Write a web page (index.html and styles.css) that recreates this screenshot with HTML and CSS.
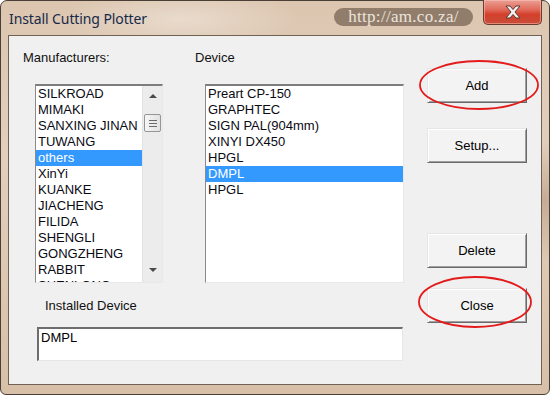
FILE: index.html
```html
<!DOCTYPE html>
<html>
<head>
<meta charset="utf-8">
<link rel="stylesheet" href="styles.css">
</head>
<body>
<div class="window">
  <div class="titlebar">
    <span class="title">Install Cutting Plotter</span>
    <span class="watermark">http://am.co.za/</span>
    <span class="closebtn">
      <svg width="20" height="14" viewBox="0 0 20 14"><path d="M3 1 L7 1 L10 4.5 L13 1 L17 1 L12 7 L17 13 L13 13 L10 9.5 L7 13 L3 13 L8 7 Z" fill="#f4f0f0" stroke="#5a3a34" stroke-width="1"/></svg>
    </span>
  </div>
  <div class="client">
    <div class="left">
      <div class="labels">
        <span class="lbl-manu">Manufacturers:</span>
        <span>Device</span>
      </div>
      <div class="lists">
        <div class="listbox manu">
          <ul class="items">
            <li>SILKROAD</li>
            <li>MIMAKI</li>
            <li>SANXING JINAN</li>
            <li>TUWANG</li>
            <li class="sel">others</li>
            <li>XinYi</li>
            <li>KUANKE</li>
            <li>JIACHENG</li>
            <li>FILIDA</li>
            <li>SHENGLI</li>
            <li>GONGZHENG</li>
            <li>RABBIT</li>
            <li>SHENLONG</li>
          </ul>
          <div class="scrollbar">
            <span class="arrow up"></span>
            <span class="thumb"><i></i><i></i><i></i></span>
            <span class="arrow down"></span>
          </div>
        </div>
        <div class="listbox device">
          <ul class="items">
            <li>Preart CP-150</li>
            <li>GRAPHTEC</li>
            <li>SIGN PAL(904mm)</li>
            <li>XINYI DX450</li>
            <li>HPGL</li>
            <li class="sel">DMPL</li>
            <li>HPGL</li>
          </ul>
        </div>
      </div>
      <div class="inst-label">Installed Device</div>
      <div class="installed">DMPL</div>
    </div>
    <div class="buttons">
      <button class="btn b-add">Add</button>
      <button class="btn b-setup">Setup...</button>
      <button class="btn b-delete">Delete</button>
      <button class="btn b-close">Close</button>
    </div>
  </div>
  <svg class="marks" width="550" height="395" viewBox="0 0 550 395">
    <ellipse cx="479" cy="85" rx="59" ry="24" fill="none" stroke="#e31b1b" stroke-width="1.8"/>
    <ellipse cx="475" cy="302" rx="56" ry="25" fill="none" stroke="#e31b1b" stroke-width="1.8"/>
  </svg>
</div>
</body>
</html>
```
FILE: styles.css
```css
* { box-sizing: border-box; }
html, body { margin: 0; padding: 0; }
body { width: 550px; height: 395px; overflow: hidden; background: #fff; }

.window {
  position: relative;
  width: 550px;
  height: 395px;
  border: 1px solid #4a3f36;
  border-radius: 7px 7px 6px 6px;
  background:
    radial-gradient(ellipse 120px 30px at 180px 18px, rgba(255,255,255,0.35), transparent),
    radial-gradient(ellipse 90px 60px at 540px 200px, rgba(150,110,80,0.35), transparent),
    linear-gradient(180deg, #dcc6b0 0%, #e2cfbc 40%, #d8c0a8 100%);
  display: flex;
  flex-direction: column;
  font-family: "Liberation Sans", Arial, sans-serif;
}

.titlebar {
  height: 34px;
  display: flex;
  align-items: flex-start;
  padding-left: 8px;
}
.title {
  font-family: "Noto Sans", "Open Sans", sans-serif;
  font-size: 14px;
  color: #17294a;
  margin-top: 8px;
  letter-spacing: -0.1px;
}
.watermark {
  margin-left: auto;
  margin-top: 7px;
  height: 18px;
  width: 139px;
  border-radius: 9px;
  background: rgba(120,100,84,0.75);
  color: #ece4dc;
  font-family: "Liberation Serif", "Times New Roman", serif;
  font-size: 17px;
  line-height: 17px;
  text-align: center;
  letter-spacing: 0.3px;
}
.closebtn {
  margin-left: 10px;
  margin-top: -1px;
  width: 59px;
  height: 25px;
  border: 1px solid #6a3a30;
  border-top: none;
  border-radius: 0 0 5px 5px;
  background: linear-gradient(180deg, #eba095 0%, #e06a5a 40%, #d4402c 60%, #c94c38 100%);
  display: flex;
  align-items: center;
  justify-content: center;
  box-shadow: inset 0 0 0 1px rgba(255,200,190,0.5);
  margin-right: 7px;
}

.client {
  flex: 1;
  margin: 0 7px 9px 7px;
  border: 1px solid #6f6255;
  background: #f0f0f0;
  display: flex;
  font-size: 13px;
  color: #000;
}
.left { width: 418px; }
.labels {
  display: flex;
  margin-top: 14px;
  padding-left: 14px;
  line-height: 16px;
  color: #111;
}
.lbl-manu { width: 172px; }

.lists {
  display: flex;
  margin-top: 18px;
  padding-left: 26px;
}
.listbox {
  height: 199px;
  background: #fff;
  border-style: solid;
  border-width: 2px 1px 1px 1px;
  border-color: #7d7d7d #e8e8e8 #e8e8e8 #8a8a8a;
  overflow: hidden;
  display: flex;
}
.manu { width: 128px; }
.device { width: 199px; margin-left: 42px; }
.items {
  list-style: none;
  margin: 0;
  padding: 0;
  flex: 1;
  overflow: hidden;
}
.items li {
  height: 16px;
  line-height: 16px;
  padding-left: 2px;
  white-space: nowrap;
  overflow: hidden;
  color: #0a0a14;
}
.items li.sel { background: #3399ff; color: #fff; }

.scrollbar {
  width: 20px;
  flex: none;
  background: #ececec;
  border-left: 1px solid #e2e2e2;
  position: relative;
  display: flex;
  flex-direction: column;
  align-items: center;
}
.arrow {
  width: 0; height: 0;
  border-left: 4px solid transparent;
  border-right: 4px solid transparent;
}
.arrow.up { border-bottom: 4px solid #4a4a4a; margin-top: 8px; }
.arrow.down { border-top: 4px solid #4a4a4a; margin-top: auto; margin-bottom: 10px; }
.thumb {
  margin-top: 16px;
  width: 17px;
  height: 18px;
  border: 1px solid #959595;
  border-radius: 2px;
  background: linear-gradient(90deg, #f6f6f6, #e2e2e2);
  display: flex;
  flex-direction: column;
  justify-content: center;
  align-items: center;
  gap: 2px;
}
.thumb i { display: block; width: 8px; height: 1px; background: #6a6a6a; }

.inst-label {
  margin-top: 15px;
  padding-left: 36px;
  line-height: 16px;
  color: #111;
}
.installed {
  margin-top: 13px;
  margin-left: 28px;
  width: 366px;
  height: 34px;
  background: #fff;
  border-style: solid;
  border-width: 2px 1px 1px 2px;
  border-color: #6d6d6d #e6e6e6 #e6e6e6 #6d6d6d;
  padding: 1px 0 0 2px;
  line-height: 16px;
}

.buttons {
  display: flex;
  flex-direction: column;
  padding-top: 32px;
}
.btn {
  width: 100px;
  height: 35px;
  font-family: "Liberation Sans", Arial, sans-serif;
  font-size: 13px;
  color: #000;
  background: #f3f3f3;
  border-style: solid;
  border-width: 1px;
  border-color: #e6e6e6 #6a6a6a #6a6a6a #e6e6e6;
  box-shadow: inset 1px 1px 0 #ffffff, inset -1px -1px 0 #a0a0a0;
  padding: 0;
}
.b-setup { margin-top: 25px; }
.b-delete { margin-top: 70px; }
.b-close { margin-top: 20px; }

.marks {
  position: absolute;
  left: -1px;
  top: -1px;
  pointer-events: none;
}
```
